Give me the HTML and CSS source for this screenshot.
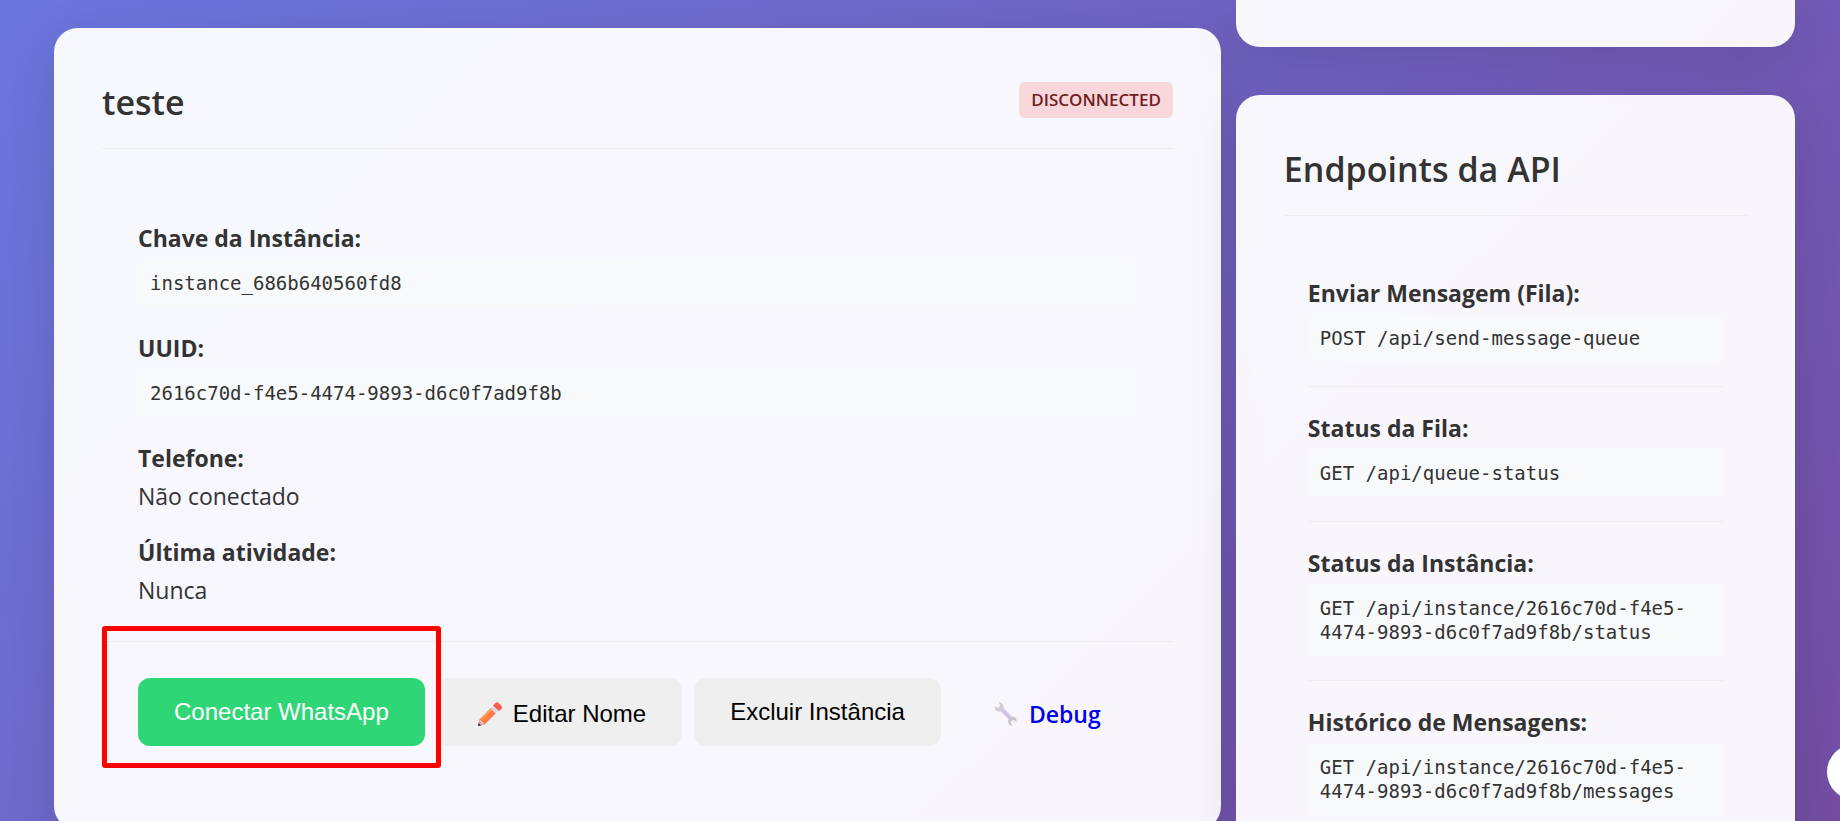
FILE: index.html
```html
<!DOCTYPE html>
<html lang="pt-BR">
<head>
    <meta charset="UTF-8">
    <meta name="viewport" content="width=device-width, initial-scale=1.0">
    <title>Instância - teste</title>
    <link rel="stylesheet" href="styles.css">
</head>
<body>
    <div class="container">
        <main class="main-column">
            <section class="card">
                <div class="card-header">
                    <h2>teste</h2>
                    <span class="status disconnected">DISCONNECTED</span>
                </div>
                <div class="instance-info">
                    <div class="info-item">
                        <strong>Chave da Instância:</strong>
                        <code>instance_686b640560fd8</code>
                    </div>
                    <div class="info-item">
                        <strong>UUID:</strong>
                        <code>2616c70d-f4e5-4474-9893-d6c0f7ad9f8b</code>
                    </div>
                    <div class="info-item">
                        <strong>Telefone:</strong>
                        <span>Não conectado</span>
                    </div>
                    <div class="info-item">
                        <strong>Última atividade:</strong>
                        <span>Nunca</span>
                    </div>
                </div>
                <div class="actions">
                    <button type="button" class="btn btn-success">Conectar WhatsApp</button>
                    <button type="button" class="btn btn-icon">
                        <svg class="icon" viewBox="0 0 33 28" aria-hidden="true">
                            <defs>
                                <linearGradient id="wood" x1="0" y1="0" x2="1" y2="1">
                                    <stop offset="0" stop-color="#ff8a3c"/>
                                    <stop offset="1" stop-color="#f9704a"/>
                                </linearGradient>
                            </defs>
                            <path d="M5 26 L6 20 L11 25 Z" fill="#d9a7a0"/>
                            <path d="M5 26 L5.500 23 L8 25.500 Z" fill="#3b1d4a"/>
                            <path d="M6 20 L18 8 L23 13 L11 25 Q10.500 22.500 9 22 Q8.500 20.500 6 20 Z" fill="url(#wood)"/>
                            <path d="M7 19 L18 8 L19.500 9.500 L9 20 Z" fill="#ff9c55"/>
                            <path d="M17.500 8.500 L20.500 5 L26 10.500 L22.500 13.500 Z" fill="#dcd6ea"/>
                            <path d="M20 5.500 L22.500 3 Q24 1.500 25.500 3 L28.500 6 Q30 7.500 28.500 9 L26 11 Z" fill="#fb5a50"/>
                        </svg>
                        Editar Nome
                    </button>
                    <button type="button" class="btn">Excluir Instância</button>
                    <a href="#debug" class="btn btn-icon btn-link">
                        <svg class="icon" viewBox="0 0 33 28" aria-hidden="true">
                            <path d="M12 8.500 L23 19.500" stroke="#cfc0df" stroke-width="4"/>
                            <path d="M13 8 L24 19" stroke="#e0d5ea" stroke-width="1"/>
                            <path d="M9.500 2 Q14 2.500 14.500 6.500 Q14.200 11.500 9.800 11.500 Q6 11 5.500 6.500 L9 8 L11.300 5.800 Z" fill="#d0cbd6"/>
                            <path d="M23.200 26 Q19 25 19.200 20.800 Q19.800 16.500 23.500 16.500 Q28 17 27.500 21.500 L24 19.800 L21.600 22 Z" fill="#c9c3d0"/>
                        </svg>
                        Debug
                    </a>
                    <span class="highlight"></span>
                </div>
            </section>
        </main>

        <aside class="side-column">
            <section class="card card-previous"></section>
            <section class="card">
                <div class="card-header">
                    <h2>Endpoints da API</h2>
                </div>
                <div class="endpoints">
                    <div class="endpoint">
                        <strong>Enviar Mensagem (Fila):</strong>
                        <code>POST /api/send-message-queue</code>
                    </div>
                    <div class="endpoint">
                        <strong>Status da Fila:</strong>
                        <code>GET /api/queue-status</code>
                    </div>
                    <div class="endpoint">
                        <strong>Status da Instância:</strong>
                        <code>GET /api/instance/2616c70d-f4e5-4474-9893-d6c0f7ad9f8b/status</code>
                    </div>
                    <div class="endpoint">
                        <strong>Histórico de Mensagens:</strong>
                        <code>GET /api/instance/2616c70d-f4e5-4474-9893-d6c0f7ad9f8b/messages</code>
                    </div>
                </div>
            </section>
        </aside>
    </div>

    <button type="button" class="floating-btn" aria-label="Ajuda"></button>
</body>
</html>
```

FILE: styles.css
```css
* {
    margin: 0;
    padding: 0;
    box-sizing: border-box;
}

body {
    height: 100vh;
    overflow: hidden;
    background: linear-gradient(135deg, #6b76dd 0%, #734da3 100%);
    font-family: "Segoe UI", "Open Sans", sans-serif;
    font-size: 23px;
    line-height: 38px;
    color: #333;
}

.container {
    display: grid;
    grid-template-columns: 48fr 23fr;
    align-items: start;
    gap: 15px;
    padding: 0 45px 0 54px;
}

.main-column {
    min-width: 0;
    padding-top: 28px;
}

.side-column {
    min-width: 0;
}

.card {
    padding: 48px;
    background: rgba(255, 255, 255, 0.95);
    border-radius: 24px;
    box-shadow: 0 12px 48px rgba(0, 0, 0, 0.12);
}

.card-previous {
    padding: 0 0 47px;
    margin-bottom: 48px;
    border-radius: 0 0 24px 24px;
}

.card-header {
    display: flex;
    justify-content: space-between;
    align-items: flex-start;
    padding-bottom: 20px;
    border-bottom: 1px solid #eee;
}

.card-header h2 {
    font-size: 34px;
    font-weight: 600;
    line-height: 52px;
}

.status {
    margin-top: 6px;
    padding: 6px 12px;
    border-radius: 6px;
    font-size: 17px;
    font-weight: 600;
    line-height: 24px;
}

.disconnected {
    background: #f8d7da;
    color: #721c24;
}

.instance-info {
    display: flex;
    flex-direction: column;
    gap: 18px;
    padding: 70px 36px 32px;
}

strong,
.info-item span {
    display: block;
}

code {
    display: block;
    margin-top: 2px;
    padding: 12px;
    background: #f8f9fa;
    border-radius: 6px;
    font-family: Consolas, "DejaVu Sans Mono", monospace;
    font-size: 19px;
    line-height: 24px;
}

.info-item code {
    margin-bottom: 4px;
}

.actions {
    position: relative;
    display: flex;
    gap: 12px;
    padding: 36px;
    border-top: 1px solid #eee;
}

.btn {
    display: flex;
    align-items: center;
    gap: 7px;
    height: 68px;
    padding: 0 36px;
    border: none;
    border-radius: 12px;
    background: #efefef;
    color: #000;
    font-family: Arial, "Liberation Sans", sans-serif;
    font-size: 24px;
    white-space: nowrap;
    cursor: pointer;
}

.btn-success {
    background: #2fd675;
    color: white;
}

.btn-icon {
    padding-top: 3px;
}

.btn-link {
    background: none;
    color: #0000ee;
    font-family: inherit;
    font-size: 23px;
    font-weight: 600;
    text-decoration: none;
}

.icon {
    width: 33px;
    height: 28px;
}

.highlight {
    position: absolute;
    top: -16px;
    left: 0;
    width: 339px;
    height: 142px;
    border: 5px solid #f00;
    border-radius: 3px;
    pointer-events: none;
}

.endpoints {
    padding: 36px 24px 24px;
}

.endpoint {
    padding: 22px 0 24px;
    border-bottom: 1px solid #eee;
}

.floating-btn {
    position: fixed;
    right: -43px;
    bottom: 21px;
    width: 56px;
    height: 56px;
    border: none;
    border-radius: 50%;
    background: white;
}
```
